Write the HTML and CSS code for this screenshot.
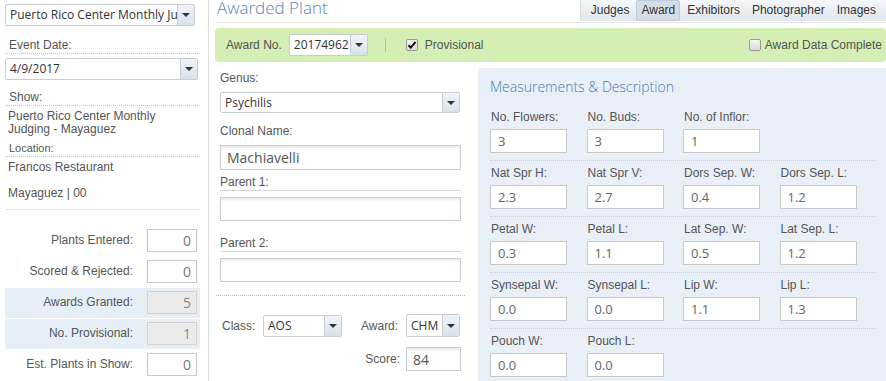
FILE: index.html
```html
<!DOCTYPE html>
<html lang="en">

<head>
    <meta charset="UTF-8">
    <title>Awarded Plant</title>
    <link rel="stylesheet" href="styles.css">
</head>

<body>
    <div class="page">
        <aside class="sidebar">
            <div class="select event-select">
                <span class="select-text">Puerto Rico Center Monthly Judging - Mayaguez</span>
                <span class="select-btn"><i class="caret"></i></span>
            </div>
            <div class="side-label">Event Date:</div>
            <div class="select date-select">
                <span class="select-text">4/9/2017</span>
                <span class="select-btn"><i class="caret"></i></span>
            </div>
            <div class="side-label show">Show:</div>
            <div class="side-text show-name">Puerto Rico Center Monthly<br>Judging - Mayaguez</div>
            <div class="side-label small">Location:</div>
            <div class="side-text location">Francos Restaurant</div>
            <div class="side-text city">Mayaguez | 00</div>

            <div class="stats">
                <div class="stat-row">
                    <span class="stat-label">Plants Entered:</span>
                    <input class="stat-value" type="text" value="0">
                </div>
                <div class="stat-row">
                    <span class="stat-label">Scored &amp; Rejected:</span>
                    <input class="stat-value" type="text" value="0">
                </div>
                <div class="stat-row computed">
                    <span class="stat-label">Awards Granted:</span>
                    <input class="stat-value" type="text" value="5" disabled>
                </div>
                <div class="stat-row computed">
                    <span class="stat-label">No. Provisional:</span>
                    <input class="stat-value" type="text" value="1" disabled>
                </div>
                <div class="stat-row">
                    <span class="stat-label">Est. Plants in Show:</span>
                    <input class="stat-value" type="text" value="0">
                </div>
            </div>
        </aside>

        <main class="main">
            <header class="main-head">
                <h1 class="title">Awarded Plant</h1>
                <nav class="tabs">
                    <span class="tab">Judges</span>
                    <span class="tab active">Award</span>
                    <span class="tab">Exhibitors</span>
                    <span class="tab">Photographer</span>
                    <span class="tab">Images</span>
                </nav>
            </header>

            <div class="award-bar">
                <span>Award No.</span>
                <div class="select award-select">
                    <span class="select-text">20174962</span>
                    <span class="select-btn"><i class="caret"></i></span>
                </div>
                <span class="bar-sep"></span>
                <span class="check checked">
                    <svg width="10" height="10" viewBox="0 0 10 10"><path d="M1.5 5.2 L3.8 7.6 L8.6 1.8" fill="none" stroke="#111" stroke-width="2"/></svg>
                </span>
                <span class="check-label">Provisional</span>
                <span class="bar-fill"></span>
                <span class="check"></span>
                <span class="check-label complete">Award Data Complete</span>
            </div>

            <div class="main-body">
                <div class="plant-col">
                    <div class="field-label first">Genus:</div>
                    <div class="select genus-select">
                        <span class="select-text">Psychilis</span>
                        <span class="select-btn"><i class="caret"></i></span>
                    </div>
                    <div class="field-label clonal">Clonal Name:</div>
                    <input class="text-input clonal-input" type="text" value="Machiavelli">
                    <div class="field-label parent">Parent 1:</div>
                    <input class="text-input parent-input" type="text" value="">
                    <div class="field-label parent second">Parent 2:</div>
                    <input class="text-input parent-input" type="text" value="">

                    <div class="dotted"></div>

                    <div class="class-row">
                        <span class="class-label">Class:</span>
                        <div class="select class-select">
                            <span class="select-text">AOS</span>
                            <span class="select-btn"><i class="caret"></i></span>
                        </div>
                        <span class="award-label">Award:</span>
                        <div class="select award-type">
                            <span class="select-text">CHM</span>
                            <span class="select-btn"><i class="caret"></i></span>
                        </div>
                    </div>
                    <div class="score-row">
                        <span class="score-label">Score:</span>
                        <input class="text-input score-input" type="text" value="84">
                    </div>
                </div>

                <section class="measure">
                    <h2 class="measure-title">Measurements &amp; Description</h2>

                    <div class="m-row">
                        <div class="m-field"><label>No. Flowers:</label><input type="text" value="3"></div>
                        <div class="m-field"><label>No. Buds:</label><input type="text" value="3"></div>
                        <div class="m-field"><label>No. of Inflor:</label><input type="text" value="1"></div>
                    </div>
                    <div class="m-row">
                        <div class="m-field"><label>Nat Spr H:</label><input type="text" value="2.3"></div>
                        <div class="m-field"><label>Nat Spr V:</label><input type="text" value="2.7"></div>
                        <div class="m-field"><label>Dors Sep. W:</label><input type="text" value="0.4"></div>
                        <div class="m-field"><label>Dors Sep. L:</label><input type="text" value="1.2"></div>
                    </div>
                    <div class="m-row">
                        <div class="m-field"><label>Petal W:</label><input type="text" value="0.3"></div>
                        <div class="m-field"><label>Petal L:</label><input type="text" value="1.1"></div>
                        <div class="m-field"><label>Lat Sep. W:</label><input type="text" value="0.5"></div>
                        <div class="m-field"><label>Lat Sep. L:</label><input type="text" value="1.2"></div>
                    </div>
                    <div class="m-row">
                        <div class="m-field"><label>Synsepal W:</label><input type="text" value="0.0"></div>
                        <div class="m-field"><label>Synsepal L:</label><input type="text" value="0.0"></div>
                        <div class="m-field"><label>Lip W:</label><input type="text" value="1.1"></div>
                        <div class="m-field"><label>Lip L:</label><input type="text" value="1.3"></div>
                    </div>
                    <div class="m-row last">
                        <div class="m-field"><label>Pouch W:</label><input type="text" value="0.0"></div>
                        <div class="m-field"><label>Pouch L:</label><input type="text" value="0.0"></div>
                    </div>
                </section>
            </div>
        </main>
    </div>
</body>

</html>
```

FILE: styles.css
```css
* {
    margin: 0;
    padding: 0;
    box-sizing: border-box;
}

html,
body {
    width: 886px;
    height: 381px;
    overflow: hidden;
    background-color: #fff;
    font-family: "Liberation Sans", Arial, sans-serif;
    font-size: 12px;
    color: #555;
}

.page {
    display: flex;
    height: 381px;
}

/* dropdown widget */

.select {
    display: flex;
    height: 22px;
    border: 1px solid #c6cdd4;
    border-radius: 2px;
    background-color: #fff;
    font-family: "Open Sans", sans-serif;
    font-size: 12px;
    color: #333;
}

.select-text {
    flex: 1;
    padding-left: 4px;
    line-height: 20px;
    white-space: nowrap;
    overflow: hidden;
}

.select-btn {
    display: flex;
    align-items: center;
    justify-content: center;
    flex: none;
    width: 17px;
    border-left: 1px solid #c6cdd4;
    background: linear-gradient(#eef3f8, #d9e2eb);
}

.caret {
    width: 0;
    height: 0;
    border-left: 4px solid transparent;
    border-right: 4px solid transparent;
    border-top: 4px solid #333;
}

/* sidebar */

.sidebar {
    flex: none;
    width: 209px;
    padding: 4px 8px 0 5px;
    border-right: 1px solid #dcdcdc;
}

.event-select {
    width: 190px;
}

.date-select {
    width: 193px;
    margin-top: 4px;
}

.side-label {
    margin-top: 11px;
    padding-left: 4px;
    line-height: 16px;
    border-bottom: 1px dotted #c4c4c4;
}

.side-label.show {
    margin-top: 9px;
}

.side-label+.side-text {
    margin-top: 4px;
}

.side-label.small {
    margin-top: 4px;
    font-size: 11px;
}

.side-text {
    padding-left: 3px;
    line-height: 13px;
}

.side-text.location {
    margin-top: 3px;
    line-height: 14px;
}

.side-text.city {
    margin-top: 12px;
    line-height: 14px;
    padding-bottom: 9px;
    border-bottom: 1px solid #e2e2e2;
}

.stats {
    margin-top: 16px;
}

.stat-row {
    display: flex;
    align-items: flex-start;
    height: 31px;
    padding-top: 3px;
}

.stat-row.computed {
    background-color: #e6eef6;
    border-bottom: 1px solid #fff;
}

.stat-label {
    flex: 1;
    padding-right: 14px;
    line-height: 23px;
    text-align: right;
}

.stat-value {
    width: 50px;
    height: 23px;
    margin-right: 3px;
    padding-right: 5px;
    border: 1px solid #c8c8c8;
    background-color: #fff;
    font-family: "Open Sans", sans-serif;
    font-size: 14px;
    color: #777;
    text-align: right;
    outline: none;
}

.stat-value:disabled {
    background-color: #ebebeb;
    border-color: #d2d2d2;
    color: #888;
}

/* main */

.main {
    flex: 1;
    padding-left: 6px;
}

.main-head {
    display: flex;
    justify-content: space-between;
    align-items: flex-start;
    height: 23px;
    border-bottom: 1px solid #e3e3e3;
}

.title {
    padding-left: 2px;
    font-family: "Open Sans", sans-serif;
    font-weight: 300;
    font-size: 17px;
    line-height: 15px;
    color: #5a88b5;
}

.tabs {
    display: flex;
    height: 21px;
    padding: 0 5px 0 5px;
    border-left: 1px solid #d5dde5;
    background: linear-gradient(#f4f7fa, #e0e7ee);
}

.tab {
    padding: 0 4px;
    line-height: 19px;
    color: #333;
    border: 1px solid transparent;
    border-radius: 2px;
}

.tab+.tab {
    margin-left: 2px;
}

.tab.active {
    background-color: #d3dde7;
    border-color: #bfcad6;
}

.award-bar {
    display: flex;
    align-items: center;
    height: 34px;
    margin-top: 5px;
    padding: 0 4px 0 11px;
    border-radius: 4px;
    background-color: #d4eeb3;
}

.award-select {
    width: 79px;
    margin-left: 7px;
}

.bar-sep {
    width: 1px;
    height: 14px;
    margin-left: 17px;
    background-color: #b4c4a2;
}

.check {
    display: flex;
    align-items: center;
    justify-content: center;
    width: 12px;
    height: 12px;
    border: 1px solid #999;
    border-radius: 2px;
    background: linear-gradient(#f6f6f6, #dadada);
}

.check.checked {
    margin-left: 20px;
}

.check-label {
    margin-left: 7px;
}

.check-label.complete {
    margin-left: 4px;
}

.bar-fill {
    flex: 1;
}

.main-body {
    display: flex;
}

.plant-col {
    flex: none;
    width: 263px;
    padding-left: 5px;
}

.field-label {
    line-height: 16px;
}

.field-label.first {
    margin-top: 8px;
}

.field-label.clonal {
    margin-top: 10px;
}

.field-label.parent {
    width: 241px;
    margin-top: 4px;
    padding-top: 1px;
    line-height: 15px;
    border-bottom: 1px solid #d8d8d8;
}

.field-label.parent.second {
    margin-top: 14px;
}

.genus-select {
    width: 240px;
    height: 21px;
    margin-top: 6px;
}

.genus-select .select-text {
    line-height: 19px;
}

.text-input {
    display: block;
    width: 241px;
    height: 24px;
    padding-left: 6px;
    border: 1px solid #c5ccd3;
    box-shadow: inset 0 3px 3px -1px #ececec;
    font-family: "Open Sans", sans-serif;
    font-size: 14px;
    color: #555;
    outline: none;
}

.clonal-input {
    height: 25px;
    margin-top: 6px;
}

.parent-input {
    margin-top: 6px;
}

.dotted {
    width: 249px;
    margin: 13px 0 0 -4px;
    border-top: 1px dotted #bbb;
}

.class-row {
    display: flex;
    align-items: center;
    margin-top: 18px;
    padding-left: 2px;
}

.class-label {
    width: 41px;
}

.class-select {
    width: 79px;
}

.award-label {
    width: 45px;
    margin-left: 19px;
}

.award-type {
    width: 54px;
    height: 23px;
}

.award-type .select-text {
    line-height: 21px;
}

.score-row {
    display: flex;
    align-items: center;
    justify-content: flex-end;
    width: 241px;
    margin-top: 10px;
}

.score-label {
    margin-right: 6px;
}

.score-input {
    width: 55px;
}

/* measurements */

.measure {
    flex: 1;
    height: 320px;
    margin-top: 6px;
    padding: 10px 10px 0 12px;
    border-radius: 4px 0 0 0;
    background-color: #e8eff7;
}

.measure-title {
    margin-bottom: 9px;
    font-family: "Open Sans", sans-serif;
    font-weight: 300;
    font-size: 14px;
    line-height: 18px;
    color: #4a7cab;
}

.m-row {
    display: grid;
    grid-template-columns: repeat(4, 77px);
    column-gap: 19.5px;
    padding: 5px 0 7px;
    border-bottom: 1px dotted #c3ccd5;
}

.m-row.last {
    border-bottom: none;
}

.m-field label {
    display: block;
    margin-bottom: 5px;
    padding-left: 1px;
    line-height: 14px;
}

.m-field input {
    display: block;
    width: 77px;
    height: 24px;
    padding-left: 7px;
    border: 1px solid #c8c8c8;
    background-color: #fff;
    font-family: "Open Sans", sans-serif;
    font-size: 13px;
    color: #666;
    outline: none;
}
```
